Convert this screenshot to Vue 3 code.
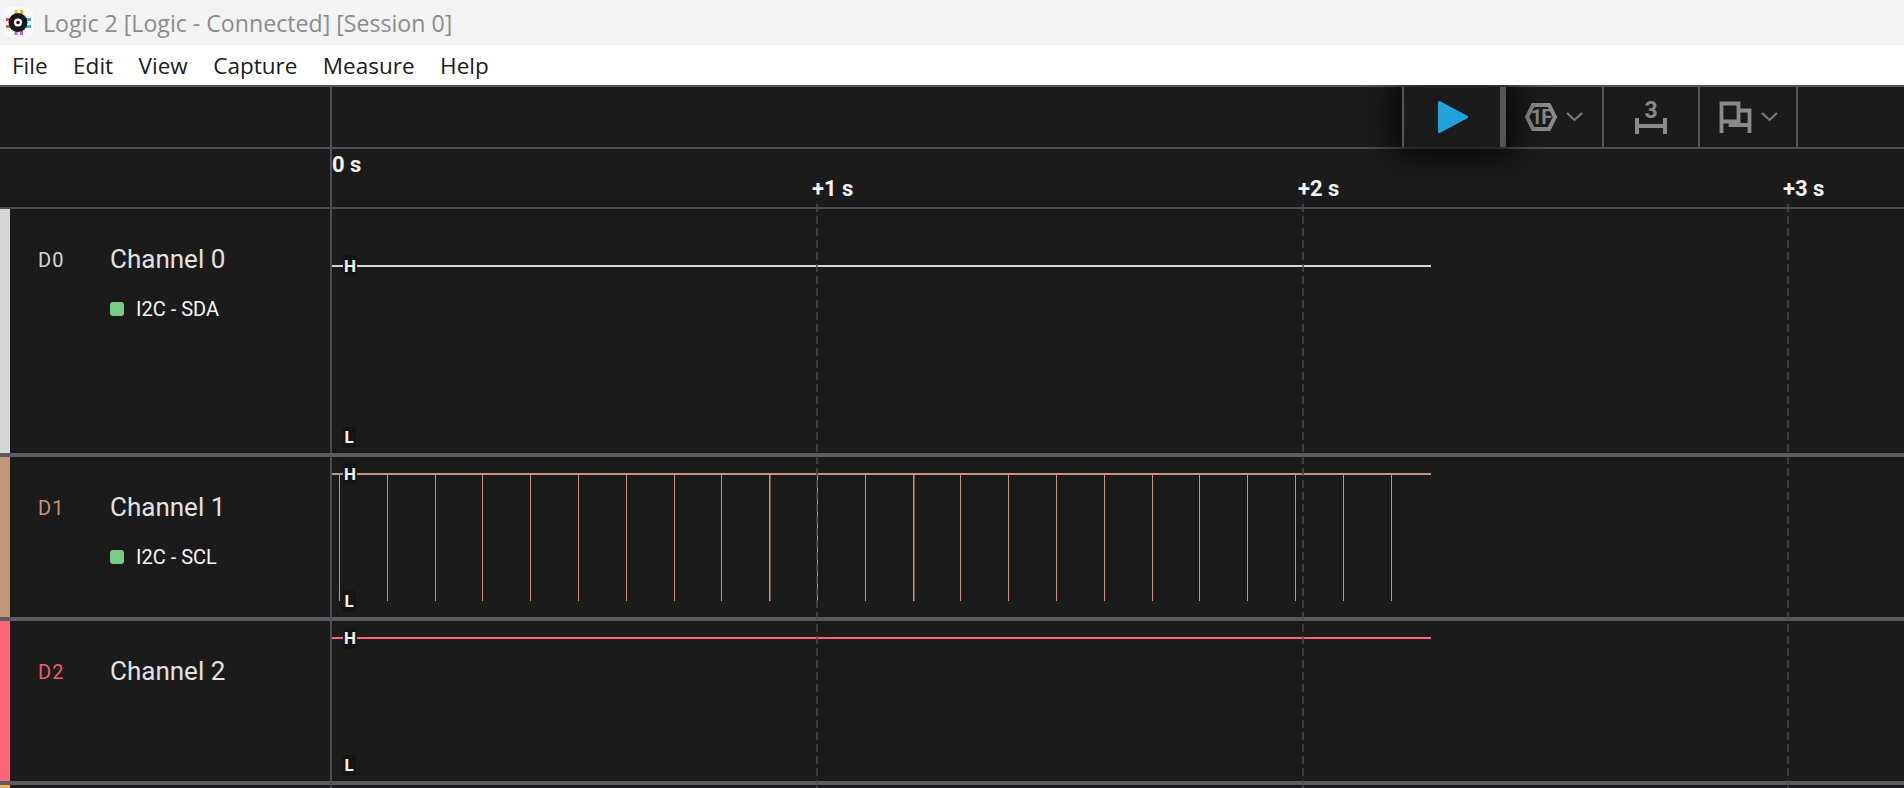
<template>
  <div class="app">
    <div class="titlebar">
      <svg class="logo" width="30" height="30" viewBox="0 0 30 30">
        <rect x="0" y="0" width="30" height="30" rx="6" fill="#fafafa" />
        <rect x="11.500" y="3" width="3" height="6" fill="#f5b335" />
        <rect x="17" y="3" width="3" height="6" fill="#f5b335" />
        <rect x="11.500" y="22" width="3" height="6" fill="#b765e8" />
        <rect x="17" y="22" width="3" height="6" fill="#b765e8" />
        <rect x="3" y="11" width="6" height="3" fill="#f0533f" />
        <rect x="3" y="18" width="6" height="3" fill="#f0533f" />
        <rect x="21" y="11" width="7" height="3" fill="#2eb3ee" />
        <rect x="21" y="18" width="7" height="3" fill="#2eb3ee" />
        <circle cx="15" cy="15.500" r="9.500" fill="#1a1a1e" />
        <circle cx="15" cy="15.500" r="4" fill="#fff" />
        <circle cx="15" cy="15.500" r="1.800" fill="#1a1a1e" />
      </svg>
      <span class="title">Logic 2 [Logic - Connected] [Session 0]</span>
    </div>

    <div class="menubar">
      <span v-for="m in menus" :key="m" class="menu-item">{{ m }}</span>
    </div>

    <div class="toolbar">
      <div class="side-head"></div>
      <div class="tools">
        <div class="tool play">
          <svg width="32" height="34" viewBox="0 0 32 34">
            <path d="M3.500 2.500 L30.500 17 L3.500 31.500 Z" fill="#23a2dc" stroke="#23a2dc" stroke-width="3" stroke-linejoin="round" />
          </svg>
        </div>
        <div class="tool">
          <svg width="60" height="30" viewBox="0 0 60 30">
            <path d="M9 3 H25 L31 15 L25 27 H9 L3 15 Z" fill="none" stroke="#8a8a8a" stroke-width="4" />
            <text x="17" y="22" text-anchor="middle" class="icon-text" font-size="20" letter-spacing="-1">1F</text>
            <path d="M43 11 L50.500 18 L58 11" fill="none" stroke="#7c7c7c" stroke-width="2" />
          </svg>
        </div>
        <div class="tool">
          <svg width="34" height="44" viewBox="0 -5 34 44">
            <path d="M3 18 V34 M31 18 V34 M3 26 H31" fill="none" stroke="#8a8a8a" stroke-width="4" />
            <text x="17" y="18" text-anchor="middle" class="icon-text" font-size="23">3</text>
          </svg>
        </div>
        <div class="tool">
          <svg width="60" height="34" viewBox="0 0 60 34">
            <path d="M3.500 33 V3.500 H20.500 V21.500 H3.500 M20.500 10.500 H31.500 V33 M31.500 25 H12.500 V21.500" fill="none" stroke="#8a8a8a" stroke-width="3.800" />
            <path d="M44 13 L51.500 20 L59 13" fill="none" stroke="#7c7c7c" stroke-width="2" />
          </svg>
        </div>
      </div>
    </div>

    <div class="body">
      <div class="ruler">
        <div class="side-head"></div>
        <div class="ruler-track">
          <span v-for="t in ticks" :key="t.label" class="tick" :class="{ first: t.first }" :style="{ left: t.x + 'px' }">{{ t.label }}</span>
        </div>
      </div>

      <div v-for="ch in channels" :key="ch.id" class="row" :class="ch.cls">
        <div class="strip"></div>
        <div class="info">
          <span class="chan-id">{{ ch.id }}</span>
          <div class="chan-text">
            <div class="chan-name">{{ ch.name }}</div>
            <div v-if="ch.analyzer" class="analyzer">
              <i class="swatch"></i>{{ ch.analyzer }}
            </div>
          </div>
        </div>
        <div class="plot">
          <svg class="wave" width="1572" :height="ch.height">
            <rect x="0" :y="ch.high - 1" width="1099" height="2" class="wave-fill" />
            <rect
              v-for="p in ch.pulses"
              :key="p.x"
              :x="p.x"
              :y="ch.high"
              :width="p.w"
              :height="ch.low - ch.high"
              class="wave-fill"
            />
          </svg>
          <span class="level" :style="{ top: ch.high + 'px' }">H</span>
          <span class="level low" :style="{ top: ch.low + 'px' }">L</span>
        </div>
      </div>

      <div class="row-next"></div>

      <i v-for="t in ticks" :key="t.x" class="grid-line" :style="{ left: t.line + 'px' }"></i>
    </div>
  </div>
</template>

<script setup>
const menus = ['File', 'Edit', 'View', 'Capture', 'Measure', 'Help']

const ticks = [
  { label: '0 s', x: 0, line: 330, first: true },
  { label: '+1 s', x: 480, line: 816 },
  { label: '+2 s', x: 966, line: 1302 },
  { label: '+3 s', x: 1451, line: 1787 },
]

// SCL low pulses, a bit under 48px apart
const pulses = []
for (let i = 0; i < 23; i++) {
  const x = Math.round(339 + i * 47.8) - 332
  pulses.push({ x, w: i === 9 || i === 12 ? 1.5 : 1 })
}

const channels = [
  { id: 'D0', name: 'Channel 0', analyzer: 'I2C - SDA', cls: 'd0', height: 244, high: 57, low: 228, pulses: [] },
  { id: 'D1', name: 'Channel 1', analyzer: 'I2C - SCL', cls: 'd1', height: 160, high: 17, low: 144, pulses },
  { id: 'D2', name: 'Channel 2', cls: 'd2', height: 160, high: 17, low: 144, pulses: [] },
]
</script>

<style>
html, body {
  margin: 0;
  background: #1b1b1b;
  overflow: hidden;
}
</style>

<style scoped>
.app {
  width: 1904px;
  height: 788px;
  overflow: hidden;
  background: #1b1b1b;
  font-family: Roboto, "Liberation Sans", sans-serif;
}

.titlebar {
  height: 45px;
  background: #f3f3f3;
  display: flex;
  align-items: center;
  padding-left: 3px;
  box-sizing: border-box;
  position: relative;
  z-index: 3;
}
.logo {
  margin: 0 10px 2px 0;
}
.title {
  font-family: "Open Sans", "Liberation Sans", sans-serif;
  font-size: 23.150px;
  color: #8c8c8c;
}

.menubar {
  height: 40px;
  background: #fff;
  display: flex;
  align-items: center;
  gap: 25.500px;
  padding-left: 12px;
  font-family: "Open Sans", "Liberation Sans", sans-serif;
  font-size: 22.500px;
  color: #1c1c1c;
  position: relative;
  z-index: 3;
}

.toolbar {
  display: flex;
  height: 60px;
  border-top: 2px solid #55555a;
  border-bottom: 2px solid #4f4f55;
}
.side-head {
  width: 330px;
  flex: none;
  border-right: 2px solid #4f4f55;
}
.tools {
  display: flex;
  margin-left: 1070px;
}
.tool {
  width: 94px;
  flex: none;
  border-left: 2px solid #55555a;
  display: flex;
  align-items: center;
  justify-content: center;
  position: relative;
  background: #1b1b1b;
}
.tool:last-child {
  width: 96px;
  border-right: 2px solid #55555a;
}
.play {
  width: 96px;
  z-index: 2;
  border-right: 6px solid #55555a;
  box-shadow: 0 0 32px 8px rgba(0, 0, 0, 0.8);
}
.play + .tool {
  width: 96px;
  border-left: 0;
}
.icon-text {
  font-family: Roboto, "Liberation Sans", sans-serif;
  font-weight: 700;
  fill: #8a8a8a;
}

.body {
  position: relative;
}

.ruler {
  display: flex;
  height: 58px;
  border-bottom: 2px solid #4a4a50;
}
.ruler-track {
  position: relative;
  flex: 1;
}
.tick {
  position: absolute;
  top: 28px;
  font-size: 22px;
  line-height: 24px;
  font-weight: 700;
  color: #f2f2f2;
  white-space: nowrap;
}
.tick.first {
  top: 4px;
}

.row {
  display: flex;
  border-bottom: 4px solid #5a5a60;
}
.row.d0 {
  height: 244px;
  --c: #d6d6d6;
  --c-label: #d6d6d6;
}
.row.d1 {
  height: 160px;
  --c: #c4957a;
  --c-label: #c4957a;
}
.row.d2 {
  height: 160px;
  --c: #ff667c;
  --c-label: #f2596b;
}
.strip {
  width: 10px;
  flex: none;
  background: var(--c);
}
.info {
  width: 322px;
  flex: none;
  box-sizing: border-box;
  display: flex;
  align-items: flex-start;
  padding: 36px 0 0 28px;
  border-right: 2px solid #4f4f55;
}
.chan-id {
  width: 72px;
  flex: none;
  font-size: 20px;
  line-height: 28px;
  margin-top: 1px;
  letter-spacing: 1px;
  color: var(--c-label);
}
.chan-name {
  font-size: 26px;
  line-height: 28px;
  color: #e2e2e2;
}
.analyzer {
  display: flex;
  align-items: center;
  margin-top: 25px;
  font-size: 20px;
  line-height: 22px;
  color: #f5f5f5;
}
.swatch {
  width: 14px;
  height: 14px;
  border-radius: 3px;
  margin-right: 12px;
  background: #7bcb89;
}

.plot {
  position: relative;
  flex: 1;
}
.wave {
  display: block;
}
.wave-fill {
  fill: var(--c);
}
.level {
  position: absolute;
  left: 11px;
  width: 14px;
  height: 22px;
  margin-top: -11px;
  line-height: 22px;
  text-align: center;
  font-size: 17px;
  font-weight: 700;
  color: #f2f2f2;
  background: #151515;
  border-radius: 4px;
}
.level.low {
  left: 10px;
}

.row-next {
  height: 3px;
  width: 10px;
  background: #f7b155;
}

.grid-line {
  position: absolute;
  top: 51px;
  bottom: 0;
  width: 2px;
  background: linear-gradient(rgba(72, 72, 78, 0.75) 8px, transparent 8px) 0 4px / 2px 12px;
}
</style>
